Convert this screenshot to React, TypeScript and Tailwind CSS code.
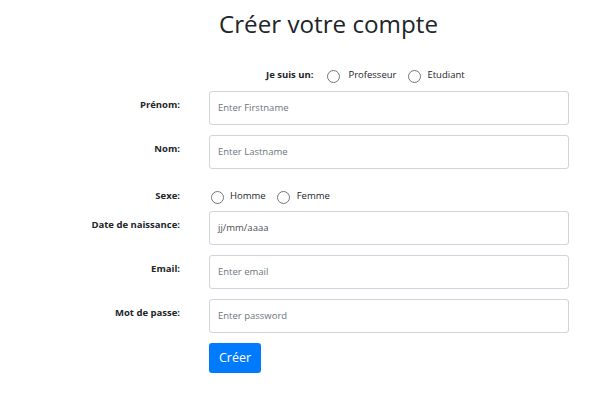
import React from "react";

function Radio({ label, gap = "ml-[8px]" }: { label: string; gap?: string }) {
  return (
    <span className="flex items-center">
      <span className="mt-[3px] inline-block h-[13px] w-[13px] rounded-full border border-[#767676] bg-white" />
      <span className={`${gap} text-[9.5px] text-[#212529]`}>{label}</span>
    </span>
  );
}

function Field({ label, placeholder, dark = false }: { label: string; placeholder: string; dark?: boolean }) {
  return (
    <div className="flex items-start">
      <div className="w-[180px] pt-[7px] text-right text-[9.5px] font-bold leading-[14px] text-[#212529]">{label}</div>
      <div className="ml-[29px] flex h-[34px] w-[360px] items-center rounded-[3px] border border-[#ced4da] bg-white pl-[8px]">
        <span className={`text-[9.5px] ${dark ? "text-[#495057]" : "text-[#6c757d]"}`}>{placeholder}</span>
      </div>
    </div>
  );
}

export default function App() {
  return (
    <div className="h-[415px] w-[616px] overflow-hidden bg-white font-['Open_Sans',sans-serif] text-[#212529]">
      <h1 className="pl-[219px] pt-[8px] text-[24.2px] font-medium leading-[32px]">Créer votre compte</h1>
      <div className="mt-[25px] flex h-[20px] items-center pl-[266px]">
        <span className="text-[9.5px] font-bold">Je suis un:</span>
        <span className="ml-[14px]">
          <Radio label="Professeur" />
        </span>
        <span className="ml-[12px]">
          <Radio label="Etudiant" gap="ml-[6px]" />
        </span>
      </div>
      <div className="mt-[6px] flex flex-col gap-[10px]">
        <Field label="Prénom:" placeholder="Enter Firstname" />
        <Field label="Nom:" placeholder="Enter Lastname" />
      </div>
      <div className="mt-[17px] flex h-[20px] items-center">
        <div className="w-[180px] text-right text-[9.5px] font-bold text-[#212529]">Sexe:</div>
        <span className="ml-[31px]">
          <Radio label="Homme" gap="ml-[6px]" />
        </span>
        <span className="ml-[11px]">
          <Radio label="Femme" gap="ml-[7px]" />
        </span>
      </div>
      <div className="mt-[5px] flex flex-col gap-[10px]">
        <Field label="Date de naissance:" placeholder="jj/mm/aaaa" dark />
        <Field label="Email:" placeholder="Enter email" />
        <Field label="Mot de passe:" placeholder="Enter password" />
      </div>
      <div className="mt-[10px] pl-[209px]">
        <button className="h-[30px] w-[52px] rounded-[3px] bg-[#007bff] text-[12.5px] text-white">Créer</button>
      </div>
    </div>
  );
}
